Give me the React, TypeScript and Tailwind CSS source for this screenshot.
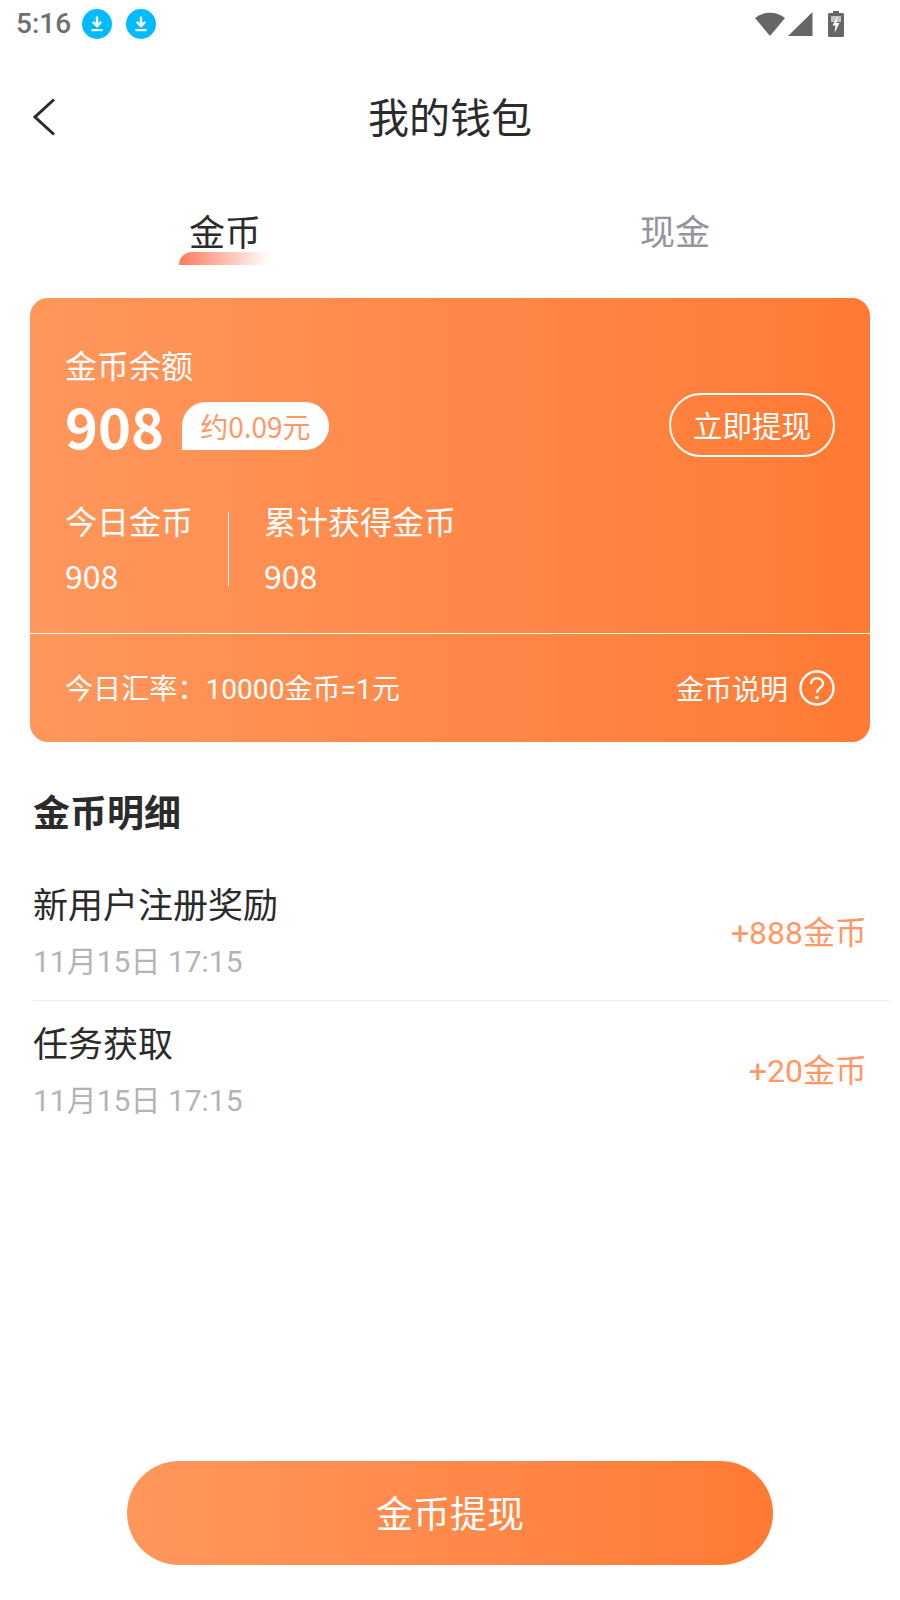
import React from "react";

const CJK = "font-['Roboto','Noto_Sans_CJK_SC',sans-serif]";
const NOTO = "font-['Noto_Sans_CJK_SC',sans-serif]";

function DownloadDot() {
  return (
    <svg width="30" height="30" viewBox="0 0 30 30">
      <circle cx="15" cy="15" r="15" fill="#00BCFF" />
      <path d="M15 7.500v9M10.800 12.800l4.200 4.200 4.200-4.200" fill="none" stroke="#fff" strokeWidth="2.4" />
      <rect x="9.500" y="20" width="11" height="2.200" fill="#fff" />
    </svg>
  );
}

function Row({ title, amount, last }: { title: string; amount: string; last?: boolean }) {
  return (
    <div className={`ml-[33px] mr-[10px] h-[140px] flex items-center justify-between pr-[23px] ${last ? "-mt-[2px]" : "border-b border-[#eeeeee]"}`}>
      <div className="flex flex-col">
        <span className={`${NOTO} text-[35px] leading-[48px] text-[#2b2b2b]`}>{title}</span>
        <span className={`${CJK} text-[30px] leading-[40px] mt-[15px] text-[#b4b4b8]`}>11月15日 17:15</span>
      </div>
      <span className={`${CJK} text-[32px] leading-[44px] mt-[4px] text-[#ff9866]`}>{amount}</span>
    </div>
  );
}

export default function App() {
  return (
    <div className="w-[900px] h-[1600px] bg-white flex flex-col">
      <div className="h-[48px] flex items-center justify-between pl-[16px] pr-[56px]">
        <div className="flex items-center">
          <span className="font-['Roboto',sans-serif] font-medium text-[28px] leading-[48px] text-[#707070]">5:16</span>
          <span className="ml-[11px] flex"><DownloadDot /></span>
          <span className="ml-[14px] flex"><DownloadDot /></span>
        </div>
        <div className="flex items-center gap-[2px] -mt-[1px]">
          <svg width="32" height="26" viewBox="0 0 32 26">
            <path d="M1 7A24 24 0 0 1 31 7L16 25Z" fill="#666" />
          </svg>
          <svg width="25" height="26" viewBox="0 0 25 26" className="mr-[13px]">
            <path d="M24.500 1V25H0Z" fill="#666" />
          </svg>
          <svg width="16" height="26" viewBox="0 0 16 26">
            <path d="M5 0h6v2h3.500a1.500 1.500 0 0 1 1.500 1.500v21a1.500 1.500 0 0 1-1.500 1.500h-13A1.500 1.500 0 0 1 0 24.500v-21A1.500 1.500 0 0 1 1.500 2H5Z" fill="#666" />
            <path d="M3 5h10v6H3Z" fill="#c4c4c4" />
            <path d="M9.500 5 4.500 14.500h3L6.500 22l5-10h-3Z" fill="#fff" />
          </svg>
        </div>
      </div>

      <div className="h-[140px] relative flex items-center justify-center">
        <svg width="24" height="38" viewBox="0 0 24 38" className="absolute left-[32px] top-[50px]">
          <path d="M22 1.500 3 19l19 17.500" fill="none" stroke="#2b2b2b" strokeWidth="3" />
        </svg>
        <span className={`${NOTO} text-[41px] leading-[56px] -mt-[6px] text-[#2b2b2b]`}>我的钱包</span>
      </div>

      <div className="h-[110px] flex">
        <div className="w-[450px] flex justify-center relative">
          <div className="flex flex-col items-center">
            <span className={`${NOTO} text-[36px] leading-[48px] mt-[18px] text-[#2b2b2b] relative z-10`}>金币</span>
            <div className="w-[91px] h-[13px] -ml-[2px] rounded-tl-[13px] bg-gradient-to-r from-[#ff7a5c] to-[#ffffff00] -mt-[2px]" />
          </div>
        </div>
        <div className="w-[450px] flex justify-center">
          <span className={`${NOTO} text-[35px] leading-[48px] mt-[18px] text-[#92959f]`}>现金</span>
        </div>
      </div>

      <div className="mx-[30px] h-[444px] rounded-[18px] bg-gradient-to-r from-[#ff975c] to-[#ff7a33] text-white flex flex-col">
        <div className="h-[336px] border-b border-white pl-[35px] pr-[35px] pt-[44px] flex flex-col">
          <span className={`${NOTO} text-[32px] leading-[44px]`}>金币余额</span>
          <div className="flex items-center justify-between mt-[4px] h-[64px]">
            <div className="flex items-center">
              <span className={`${NOTO} text-[56px] leading-[64px] font-bold mt-[5px]`}>908</span>
              <span className={`${NOTO} ml-[18px] mt-[8px] h-[48px] rounded-[24px] rounded-bl-none bg-white text-[#ff9866] text-[28px] leading-[48px] px-[18px]`}>约0.09元</span>
            </div>
            <span className={`${NOTO} h-[64px] w-[166px] mt-[6px] rounded-full border-2 border-white text-[29.5px] leading-[58px] text-center`}>立即提现</span>
          </div>
          <div className="flex mt-[44px]">
            <div className="w-[163px] flex flex-col">
              <span className={`${NOTO} text-[32px] leading-[44px]`}>今日金币</span>
              <span className={`${NOTO} text-[32px] leading-[44px] mt-[11px]`}>908</span>
            </div>
            <div className="w-px h-[74px] bg-white mt-[14px]" />
            <div className="ml-[35px] flex flex-col">
              <span className={`${NOTO} text-[32px] leading-[44px]`}>累计获得金币</span>
              <span className={`${NOTO} text-[32px] leading-[44px] mt-[11px]`}>908</span>
            </div>
          </div>
        </div>
        <div className="flex-1 flex items-center justify-between pl-[35px] pr-[35px]">
          <span className={`${CJK} text-[28.1px] leading-[40px] mt-[3px]`}>今日汇率：10000金币=1元</span>
          <div className="flex items-center gap-[11px]">
            <span className={`${NOTO} text-[28px] leading-[40px]`}>金币说明</span>
            <svg width="36" height="36" viewBox="0 0 36 36">
              <circle cx="18" cy="18" r="16.500" fill="none" stroke="#fff" strokeWidth="2.400" />
              <path d="M12 14c0-3.500 2.700-5.700 6-5.700s6 2.200 6 5.400c0 4.300-6 4.800-6 9" fill="none" stroke="#fff" strokeWidth="2.400" />
              <circle cx="18" cy="27.500" r="1.800" fill="#fff" />
            </svg>
          </div>
        </div>
      </div>

      <div className={`${NOTO} ml-[33px] mt-[44px] text-[37px] leading-[50px] font-bold text-[#2b2b2b]`}>金币明细</div>

      <div className="mt-[25px] flex flex-col">
        <Row title="新用户注册奖励" amount="+888金币" />
        <Row title="任务获取" amount="+20金币" last />
      </div>

      <div className={`${NOTO} mt-auto mb-[35px] mx-auto w-[646px] h-[104px] rounded-[52px] bg-gradient-to-r from-[#ff975c] to-[#ff7a33] flex items-center justify-center text-white text-[37px]`}>金币提现</div>
    </div>
  );
}
